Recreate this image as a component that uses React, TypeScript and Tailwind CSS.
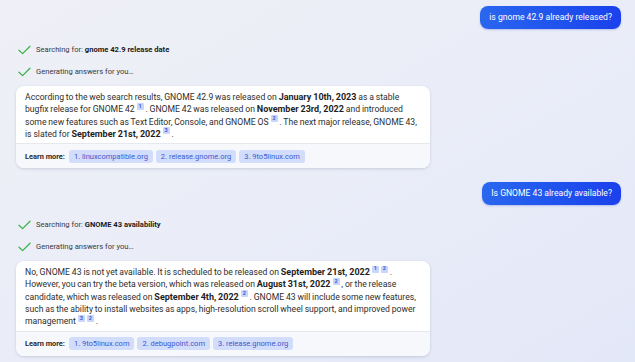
import { ReactNode } from "react";

const Cite = ({ n }: { n: number }) => (
  <sup className="ml-[2px] inline-flex h-[7px] min-w-[7px] items-center justify-center rounded-[1px] bg-[#c9d5fb] px-[1px] align-[2px] text-[5.5px] font-bold leading-none text-[#3a5bd9]">
    {n}
  </sup>
);

const B = ({ children }: { children: ReactNode }) => (
  <b className="text-[9px] font-bold text-[#1e1e1e]">{children}</b>
);

const Check = () => (
  <svg width="13" height="10" viewBox="0 0 13 10" className="shrink-0">
    <path
      d="M1 5.2 L4.6 8.6 L12 1.2"
      fill="none"
      stroke="#3bb54a"
      strokeWidth="1.3"
      strokeLinecap="round"
      strokeLinejoin="round"
    />
  </svg>
);

function UserBubble({ children }: { children: ReactNode }) {
  return (
    <div className="flex justify-end pr-[14px]">
      <div className="flex h-[23px] items-center rounded-[8px] bg-gradient-to-r from-[#2a66ef] to-[#1b40ec] px-[9px] text-[8.6px] text-white shadow-[0_1px_2px_rgba(30,60,200,0.25)]">
        {children}
      </div>
    </div>
  );
}

function Status({ label, query }: { label: string; query?: string }) {
  return (
    <div className="flex h-[14px] items-center gap-[5px] pl-[18px] text-[7.6px] text-[#3a3a3a]">
      <Check />
      <span>
        {label}
        {query && <b className="font-bold text-[#1a1a1a]"> {query}</b>}
      </span>
    </div>
  );
}

function Card({ children, links }: { children: ReactNode; links: string[] }) {
  return (
    <div className="ml-[16px] w-[414px] overflow-hidden rounded-[8px] bg-white shadow-[0_1px_3px_rgba(40,50,90,0.18)]">
      <div className="pb-[3px] pl-[9px] pr-[7px] pt-[5px] text-[8.65px] leading-[12.3px] text-[#2e2e2e] [word-spacing:-0.3px]">
        {children}
      </div>
      <div className="flex h-[25px] items-center gap-[3px] border-t border-[#e7e8ee] bg-[#f7f8fc] px-[9px]">
        <span className="mr-[1px] text-[7.4px] font-bold text-[#2a2a2a]">Learn more:</span>
        {links.map((l, i) => (
          <span
            key={l}
            className="flex h-[13px] items-center rounded-[3px] bg-[#d2dcfb] px-[5px] text-[7.5px] text-[#3d5acb]"
          >
            {i + 1}. {l}
          </span>
        ))}
      </div>
    </div>
  );
}

export default function App() {
  return (
    <main
      className="flex h-[362px] w-[635px] flex-col overflow-hidden bg-gradient-to-br from-[#eff0f6] via-[#eaedf8] to-[#e3e8f8] pt-[6px]"
      style={{ fontFamily: "Roboto, 'Noto Sans', sans-serif" }}
    >
      <section className="flex flex-col">
        <UserBubble>is gnome 42.9 already released?</UserBubble>
        <div className="flex flex-col gap-[8px] pb-[7px] pt-[14px]">
          <Status label="Searching for:" query="gnome 42.9 release date" />
          <Status label="Generating answers for you…" />
        </div>
        <Card links={["linuxcompatible.org", "release.gnome.org", "9to5linux.com"]}>
          According to the web search results, GNOME 42.9 was released on{" "}
          <B>January 10th, 2023</B> as a stable bugfix release for GNOME 42
          <Cite n={1} /> . GNOME 42 was released on <B>November 23rd, 2022</B>{" "}
          and introduced
          <br />
          some new features such as Text Editor, Console, and GNOME OS
          <Cite n={2} /> . The next major release, GNOME 43,
          <br />
          is slated for <B>September 21st, 2022</B>
          <Cite n={3} /> .
        </Card>
      </section>

      <section className="flex flex-col pt-[14px]">
        <UserBubble>Is GNOME 43 already available?</UserBubble>
        <div className="flex flex-col gap-[8px] pb-[7px] pt-[13px]">
          <Status label="Searching for:" query="GNOME 43 availability" />
          <Status label="Generating answers for you…" />
        </div>
        <Card links={["9to5linux.com", "debugpoint.com", "release.gnome.org"]}>
          No, GNOME 43 is not yet available. It is scheduled to be released on{" "}
          <B>September 21st, 2022</B>
          <Cite n={1} />
          <Cite n={2} /> . However, you can try the beta version, which was
          released on <B>August 31st, 2022</B>
          <Cite n={2} /> , or the release candidate, which was released on{" "}
          <B>September 4th, 2022</B>
          <Cite n={2} /> . GNOME 43 will include some new features, such as the
          ability to install websites as apps, high-resolution scroll wheel
          support, and improved power management
          <Cite n={3} />
          <Cite n={2} /> .
        </Card>
      </section>
    </main>
  );
}
